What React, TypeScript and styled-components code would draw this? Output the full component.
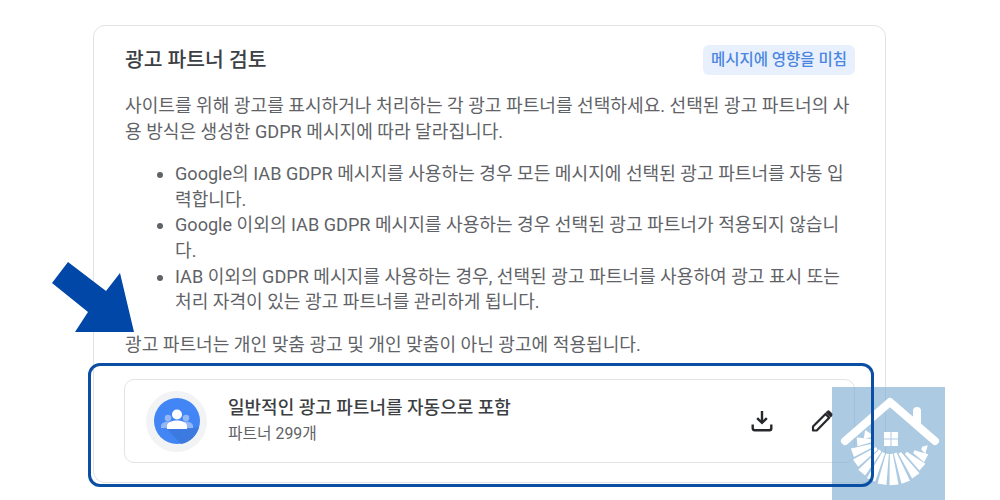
import styled, { createGlobalStyle } from 'styled-components';

const GlobalStyle = createGlobalStyle`
	html, body {
		margin: 0;
		padding: 0;
		background: #fff;
	}
	body {
		width: 1000px;
		height: 500px;
		overflow: hidden;
		font-family: Roboto, "Noto Sans CJK KR", sans-serif;
	}
`;

const Page = styled.main`
	position: relative;
	width: 1000px;
	height: 500px;
	overflow: hidden;
	box-sizing: border-box;
	padding: 25px 0 0 93px;
`;

const Card = styled.section`
	width: 793px;
	height: 458px;
	box-sizing: border-box;
	border: 1px solid #e2e3e5;
	border-radius: 12px;
	padding: 18px 30px 0;
	color: #5f6368;
	font-size: 18.1px;
	line-height: 25.6px;
`;

const Header = styled.header`
	display: flex;
	align-items: center;
	justify-content: space-between;
	height: 32px;
	margin-bottom: 17px;
	padding-left: 1px;
`;

const Title = styled.h2`
	margin: 0;
	padding-top: 2px;
	font-size: 20.4px;
	font-weight: 500;
	color: #3c4043;
`;

const Badge = styled.span`
	background: #e8f0fe;
	color: #4a86e0;
	border-radius: 6px;
	font-size: 15.5px;
	font-weight: 500;
	line-height: 30px;
	padding: 0 8px;
`;

const Text = styled.p`
	margin: 0;
	padding-left: 1px;
	word-break: break-all;
`;

const List = styled.ul`
	margin: 17px 0;
	padding: 0 0 0 51px;
	word-break: break-all;
`;

const Partner = styled.div`
	position: relative;
	height: 84px;
	margin-top: 22px;
	box-sizing: border-box;
	border: 1px solid #e2e3e5;
	border-radius: 10px;
	display: flex;
	align-items: center;
	padding: 0 20px 0 21px;
`;

const Highlight = styled.div`
	position: absolute;
	z-index: 2;
	inset: -17px -20px -25px -37px;
	border: 3px solid #0a4fa3;
	border-radius: 12px;
	pointer-events: none;
`;

const Avatar = styled.div`
	width: 61px;
	height: 61px;
	border-radius: 50%;
	background: #f1f3f4;
	display: flex;
	align-items: center;
	justify-content: center;
	flex-shrink: 0;
`;

const PartnerInfo = styled.div`
	flex: 1;
	margin-left: 21px;
	padding-bottom: 2px;
	display: flex;
	flex-direction: column;
	gap: 3px;
`;

const PartnerName = styled.div`
	font-size: 18px;
	font-weight: 500;
	line-height: 24px;
	color: #3c4043;
`;

const PartnerCount = styled.div`
	font-size: 15.8px;
	line-height: 22px;
	color: #5f6368;
`;

const Actions = styled.div`
	display: flex;
	gap: 36px;
	color: #26282b;
`;

const IconButton = styled.button`
	width: 24px;
	height: 24px;
	padding: 0;
	border: 0;
	background: none;
	color: inherit;
`;

const Arrow = styled.svg`
	position: absolute;
	left: 52px;
	top: 262px;
`;

const Watermark = styled.svg`
	position: absolute;
	left: 832px;
	top: 387px;
`;

const GroupsIcon = () => (
	<svg width="46" height="46" viewBox="0 0 46 46">
		<circle cx="23" cy="23" r="23" fill="#4285f4" />
		<path d="M13 31 L27 46 A23 23 0 0 0 45 29 L33 31 Z" fill="#3d7ae0" />
		<circle cx="14" cy="20" r="3.300" fill="#94b7f7" />
		<circle cx="32" cy="20" r="3.300" fill="#94b7f7" />
		<path d="M7 30 v-2 c0-3 4-4.500 7-4.500 s7 1.500 7 4.500 v2 Z" fill="#94b7f7" />
		<path d="M25 30 v-2 c0-3 4-4.500 7-4.500 s7 1.500 7 4.500 v2 Z" fill="#94b7f7" />
		<circle cx="23" cy="16.500" r="5" fill="#fff" />
		<path d="M13 31 v-3 c0-4 6-5.500 10-5.500 s10 1.500 10 5.500 v3 Z" fill="#fff" />
	</svg>
);

const DownloadIcon = () => (
	<svg width="24" height="24" viewBox="0 0 24 24" fill="currentColor">
		<path d="M10.800 2 h2.400 v9 l2.800-2.800 1.700 1.700 -5.700 5.700 -5.700-5.700 1.700-1.700 2.800 2.800 Z" />
		<path d="M1.500 15.500 h2.400 v3.500 a1 1 0 0 0 1 1 h14.200 a1 1 0 0 0 1-1 v-3.500 h2.400 v4 a2.900 2.900 0 0 1-2.900 2.900 h-15.600 A2.900 2.900 0 0 1 1.500 19.500 Z" />
	</svg>
);

const PencilIcon = () => (
	<svg width="24" height="24" viewBox="0 0 24 24" fill="none" stroke="currentColor">
		<path d="M3 21.500 v-4 L15.500 5 l3.700 3.700 L6.700 21.500 Z" strokeWidth="2.200" strokeLinejoin="round" />
		<path d="M16 3.500 l1.500-1.300 a1.500 1.500 0 0 1 2 0 l2.500 2.500 a1.500 1.500 0 0 1 0 2 L20.500 8 Z" fill="currentColor" strokeWidth="1" />
	</svg>
);

// angle of each ray of the fan, with its inner and outer radius
const rays: [number, number, number][] = [
	[106, 33, 38],
	[118, 27, 41],
	[131, 21, 43],
	[145, 17, 45],
	[160, 15, 46],
	[175, 15, 46],
	[190, 15, 46],
	[205, 15, 45],
	[220, 15, 44],
	[235, 16, 42],
	[250, 17, 40],
	[265, 18, 33],
	[280, 19, 26],
];

const HouseMark = () => (
	<Watermark width="113" height="113" viewBox="0 0 113 113">
		<rect width="113" height="113" fill="#7fadd2" fillOpacity="0.65" />
		<path d="M13 54 L58 15 L103 54" fill="none" stroke="#fff" strokeWidth="8" strokeLinecap="round" strokeLinejoin="round" />
		<path d="M85 24 v12" stroke="#fff" strokeWidth="8" strokeLinecap="round" />
		<path d="M52 45 h6.500 v6.500 h-6.500 Z M59.500 45 h6.500 v6.500 h-6.500 Z M52 52.500 h6.500 v6.500 h-6.500 Z M59.500 52.500 h6.500 v6.500 h-6.500 Z" fill="#fff" />
		{rays.map(([angle, inner, outer]) => (
			<path
				key={angle}
				d={`M-1.500 -${inner} L1.500 -${inner} L4.500 -${outer} L-4.500 -${outer} Z`}
				fill="#fff"
				transform={`translate(58 52) rotate(${angle})`}
			/>
		))}
	</Watermark>
);

function App() {
	return (
		<Page>
			<GlobalStyle />
			<Card>
				<Header>
					<Title>광고 파트너 검토</Title>
					<Badge>메시지에 영향을 미침</Badge>
				</Header>
				<Text>
					사이트를 위해 광고를 표시하거나 처리하는 각 광고 파트너를 선택하세요. 선택된 광고 파트너의 사용 방식은 생성한 GDPR 메시지에 따라 달라집니다.
				</Text>
				<List>
					<li>Google의 IAB GDPR 메시지를 사용하는 경우 모든 메시지에 선택된 광고 파트너를 자동 입력합니다.</li>
					<li>Google 이외의 IAB GDPR 메시지를 사용하는 경우 선택된 광고 파트너가 적용되지 않습니다.</li>
					<li>IAB 이외의 GDPR 메시지를 사용하는 경우, 선택된 광고 파트너를 사용하여 광고 표시 또는 처리 자격이 있는 광고 파트너를 관리하게 됩니다.</li>
				</List>
				<Text>광고 파트너는 개인 맞춤 광고 및 개인 맞춤이 아닌 광고에 적용됩니다.</Text>
				<Partner>
					<Avatar>
						<GroupsIcon />
					</Avatar>
					<PartnerInfo>
						<PartnerName>일반적인 광고 파트너를 자동으로 포함</PartnerName>
						<PartnerCount>파트너 299개</PartnerCount>
					</PartnerInfo>
					<Actions>
						<IconButton aria-label="다운로드">
							<DownloadIcon />
						</IconButton>
						<IconButton aria-label="수정">
							<PencilIcon />
						</IconButton>
					</Actions>
					<Highlight />
				</Partner>
			</Card>
			<Arrow width="95" height="72" viewBox="0 0 95 72">
				<path d="M0 21 L16 0 L54 29 L68 11 L82 70 L23 70 L36 50 Z" fill="#0047a8" />
			</Arrow>
			<HouseMark />
		</Page>
	);
}

export default App;
